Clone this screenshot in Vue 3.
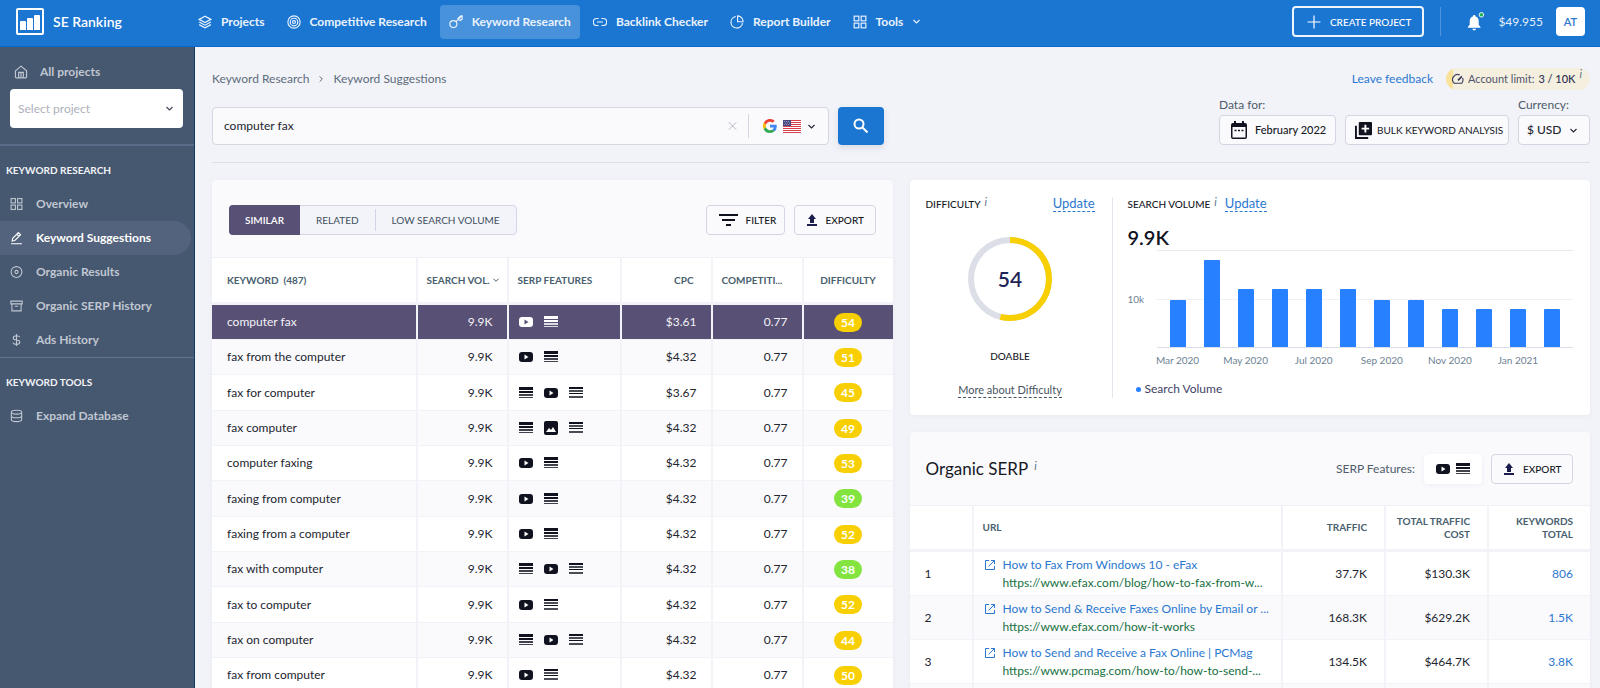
<script setup>
import { ref } from 'vue'

const icons = {
  layers: '<path d="M12 2 2 7.5l10 5.5 10-5.5z"/><path d="m2 12 10 5.500 10-5.500"/><path d="m2 16.500 10 5.500 10-5.500"/>',
  target: '<circle cx="12" cy="12" r="10.500"/><circle cx="12" cy="12" r="6.500"/><circle cx="12" cy="12" r="2.500"/>',
  key: '<circle cx="7.500" cy="15.500" r="6"/><path d="m12 11.500 10-10M16 7.500l3 2L22.500 7V1.500h-2l-5 4z"/>',
  link: '<path d="M9.500 6H6.500a6 6 0 0 0 0 12h3M14.500 6h3a6 6 0 0 1 0 12h-3M7 12h10"/>',
  pie: '<path d="M10 2.500A10 10 0 1 0 21.500 14"/><path d="M13 1.500v10h9.500a10 10 0 0 0-9.500-10z"/>',
  grid: '<rect x="2" y="2" width="8" height="8"/><rect x="14" y="2" width="8" height="8"/><rect x="2" y="14" width="8" height="8"/><rect x="14" y="14" width="8" height="8"/>',
  home: '<path d="M2.500 10 12 2l9.500 8v10.500a1.500 1.500 0 0 1-1.500 1.500H4a1.500 1.500 0 0 1-1.500-1.500z"/><path d="M8 22v-9.500h8V22M12 12.500V22"/>',
  pencil: '<path d="M2 22.500h20M4 17.500l1-5L15.500 2l4 4L9 16.500zM12.500 5l4 4"/>',
  disc: '<circle cx="12" cy="12" r="10"/><circle cx="12" cy="12" r="3"/>',
  archive: '<path d="M1.500 3h21v5h-21zM3.500 8v13h17V8M9 12.500h6"/>',
  dollar: '<path d="M12 1v22M18 6.500C17 4.500 15 4 12 4c-8 0-8 8 0 8s8 8 0 8c-3.500 0-5.500-1-6.500-3"/>',
  database: '<ellipse cx="12" cy="5" rx="9.500" ry="3.500"/><path d="M2.500 5v14c0 4.500 19 4.500 19 0V5M2.500 12c0 4.500 19 4.500 19 0"/>',
  plus: '<path d="M12 1v22M1 12h22"/>',
  chevron: '<path d="m4 8 8 8 8-8"/>',
  right: '<path d="m8 4 8 8-8 8"/>',
  close: '<path d="m2 2 20 20M22 2 2 22"/>',
  external: '<path d="M10 3H3v18h18v-7M14 3h7v7M21 3 9 15"/>'
}

const features = {
  video: '<rect x="1" y="3" width="14" height="10" rx="3" fill="currentColor"/><path class="play" d="m6.500 5.500 4 2.500-4 2.500z"/>',
  lines: '<path fill="currentColor" d="M1 2h14v3H1zM1 6h14v2H1z"/><path fill="currentColor" opacity=".8" d="M1 9h14v2H1zM1 12h14v1H1z"/>',
  list: '<path fill="currentColor" d="M1 2h14v2H1zM1 8h14v1H1z"/><path fill="currentColor" opacity=".75" d="M1 5h14v2H1zM1 11h14v2H1z"/>',
  image: '<rect x="1" y="1" width="14" height="14" rx="2" fill="currentColor"/><path class="play" d="m3 12 3-4 2 2 2-3 3 5z"/>'
}

const nav = [
  { label: 'Projects', icon: 'layers' },
  { label: 'Competitive Research', icon: 'target' },
  { label: 'Keyword Research', icon: 'key', active: true },
  { label: 'Backlink Checker', icon: 'link' },
  { label: 'Report Builder', icon: 'pie' },
  { label: 'Tools', icon: 'grid', menu: true }
]

const researchMenu = [
  { label: 'Overview', icon: 'grid' },
  { label: 'Keyword Suggestions', icon: 'pencil', active: true },
  { label: 'Organic Results', icon: 'disc' },
  { label: 'Organic SERP History', icon: 'archive' },
  { label: 'Ads History', icon: 'dollar' }
]

const query = ref('computer fax')
const tab = ref('SIMILAR')
const tabs = ['SIMILAR', 'RELATED', 'LOW SEARCH VOLUME']

const keywords = [
  { name: 'computer fax', cpc: '$3.61', difficulty: 54, serp: ['video', 'lines'] },
  { name: 'fax from the computer', cpc: '$4.32', difficulty: 51, serp: ['video', 'lines'] },
  { name: 'fax for computer', cpc: '$3.67', difficulty: 45, serp: ['lines', 'video', 'list'] },
  { name: 'fax computer', cpc: '$4.32', difficulty: 49, serp: ['lines', 'image', 'list'] },
  { name: 'computer faxing', cpc: '$4.32', difficulty: 53, serp: ['video', 'lines'] },
  { name: 'faxing from computer', cpc: '$4.32', difficulty: 39, serp: ['video', 'lines'] },
  { name: 'faxing from a computer', cpc: '$4.32', difficulty: 52, serp: ['video', 'lines'] },
  { name: 'fax with computer', cpc: '$4.32', difficulty: 38, serp: ['lines', 'video', 'list'] },
  { name: 'fax to computer', cpc: '$4.32', difficulty: 52, serp: ['video', 'list'] },
  { name: 'fax on computer', cpc: '$4.32', difficulty: 44, serp: ['lines', 'video', 'list'] },
  { name: 'fax from computer', cpc: '$4.32', difficulty: 50, serp: ['video', 'list'] }
]

// bar heights in percent of the plot area
const months = [
  { label: 'Mar 2020', value: 49 },
  { value: 91 },
  { label: 'May 2020', value: 60 },
  { value: 60 },
  { label: 'Jul 2020', value: 60 },
  { value: 60 },
  { label: 'Sep 2020', value: 49 },
  { value: 49 },
  { label: 'Nov 2020', value: 40 },
  { value: 40 },
  { label: 'Jan 2021', value: 40 },
  { value: 40 }
]

const results = [
  { title: 'How to Fax From Windows 10 - eFax', url: 'https://www.efax.com/blog/how-to-fax-from-w...', traffic: '37.7K', cost: '$130.3K', total: '806' },
  { title: 'How to Send & Receive Faxes Online by Email or ...', url: 'https://www.efax.com/how-it-works', traffic: '168.3K', cost: '$629.2K', total: '1.5K' },
  { title: 'How to Send and Receive a Fax Online | PCMag', url: 'https://www.pcmag.com/how-to/how-to-send-...', traffic: '134.5K', cost: '$464.7K', total: '3.8K' },
  { title: '', url: '', traffic: '', cost: '', total: '' }
]
</script>

<template>
  <div class="app">
    <header class="topbar">
      <a href="#" class="brand">
        <svg class="logo" viewBox="0 0 28 27">
          <rect x="1" y="1" width="26" height="25" rx="1" fill="none" stroke="#fff" stroke-width="2" />
          <path fill="#fff" d="M4 14a1 1 0 0 1 1-1h4a1 1 0 0 1 1 1v8H4zM11 11a1 1 0 0 1 1-1h4a1 1 0 0 1 1 1v11h-6zM18 8a1 1 0 0 1 1-1h4a1 1 0 0 1 1 1v14h-6z" />
        </svg>
        SE Ranking
      </a>
      <nav class="nav">
        <a v-for="item in nav" :key="item.label" href="#" class="nav-item" :class="{ active: item.active }">
          <svg class="icon" viewBox="0 0 24 24" v-html="icons[item.icon]"></svg>
          {{ item.label }}
          <svg v-if="item.menu" class="icon chevron" viewBox="0 0 24 24" v-html="icons.chevron"></svg>
        </a>
      </nav>
      <div class="account">
        <button class="create">
          <svg class="icon" viewBox="0 0 24 24" v-html="icons.plus"></svg>
          CREATE PROJECT
        </button>
        <span class="bar"></span>
        <button class="bell" aria-label="Notifications">
          <svg viewBox="0 0 20 22">
            <path fill="#fff" d="M1 16.500 3 14v-4c0-3 1.500-4.500 3.500-5.200a1.500 1.500 0 0 1 3 0C11.500 5.500 13 7 13 10v4l2 2.500v1H1zM6 18.500h4a2 2 0 0 1-4 0z" />
            <circle cx="16" cy="3" r="2.500" fill="#19b34f" stroke="#fff" />
          </svg>
        </button>
        <span class="balance">$49.955</span>
        <button class="avatar">AT</button>
      </div>
    </header>

    <div class="body">
      <aside class="sidebar">
        <div class="project">
          <a href="#" class="all-projects">
            <svg class="icon" viewBox="0 0 24 24" v-html="icons.home"></svg>
            All projects
          </a>
          <div class="select project-select">
            <select aria-label="Select project">
              <option>Select project</option>
            </select>
            <svg class="icon chevron" viewBox="0 0 24 24" v-html="icons.chevron"></svg>
          </div>
        </div>
        <div class="menu">
          <h2>KEYWORD RESEARCH</h2>
          <a v-for="item in researchMenu" :key="item.label" href="#" class="menu-item" :class="{ active: item.active }">
            <svg class="icon" viewBox="0 0 24 24" v-html="icons[item.icon]"></svg>
            {{ item.label }}
          </a>
        </div>
        <div class="menu">
          <h2>KEYWORD TOOLS</h2>
          <a href="#" class="menu-item">
            <svg class="icon" viewBox="0 0 24 24" v-html="icons.database"></svg>
            Expand Database
          </a>
        </div>
      </aside>

      <main class="main">
        <section class="tools">
          <div class="tools-left">
            <div class="crumbs">
              <a href="#">Keyword Research</a>
              <svg class="icon" viewBox="0 0 24 24" v-html="icons.right"></svg>
              <span>Keyword Suggestions</span>
            </div>
            <form class="search" @submit.prevent>
              <div class="search-box">
                <input v-model="query" type="text" aria-label="Keyword" />
                <button type="button" class="clear" aria-label="Clear" @click="query = ''">
                  <svg class="icon" viewBox="0 0 24 24" v-html="icons.close"></svg>
                </button>
                <button type="button" class="engine" aria-label="Search engine">
                  <svg class="google" viewBox="0 0 48 48">
                    <path fill="#ea4335" d="M24 9.500c3.500 0 6.700 1.200 9.200 3.600l6.900-6.900A24 24 0 0 0 2.600 13.200l8 6.200C12.400 13.700 17.700 9.500 24 9.500z" />
                    <path fill="#4285f4" d="M47 24.500c0-1.600-.2-3.100-.4-4.500H24v9h12.900c-.6 3-2.200 5.500-4.700 7.200l7.700 6C44.400 38 47 31.800 47 24.500z" />
                    <path fill="#fbbc05" d="M10.500 28.600a14.500 14.500 0 0 1 0-9.200l-8-6.200a24 24 0 0 0 0 21.600z" />
                    <path fill="#34a853" d="M24 48c6.500 0 11.900-2.100 15.900-5.800l-7.700-6c-2.200 1.500-4.900 2.300-8.200 2.300-6.300 0-11.600-4.200-13.500-9.900l-8 6.200A24 24 0 0 0 24 48z" />
                  </svg>
                  <svg class="flag" viewBox="0 0 18 13">
                    <path fill="#fff" d="M0 0h18v13H0z" />
                    <path fill="#d8414b" d="M0 0h18v1H0zM0 2h18v1H0zM0 4h18v1H0zM0 6h18v1H0zM0 8h18v1H0zM0 10h18v1H0zM0 12h18v1H0z" />
                    <path fill="#4a4a80" d="M0 0h8v6H0z" />
                    <path stroke="#b9b9d6" stroke-dasharray="1 1" stroke-width=".6" d="M1 1.500h6M2 3h6M1 4.500h6" />
                  </svg>
                  <svg class="icon chevron" viewBox="0 0 24 24" v-html="icons.chevron"></svg>
                </button>
              </div>
              <button class="search-btn" aria-label="Search">
                <svg viewBox="0 0 16 16" fill="none" stroke="#fff" stroke-width="2">
                  <circle cx="6" cy="6" r="4.500" />
                  <path d="m9.500 9.500 5 5" />
                </svg>
              </button>
            </form>
          </div>

          <div class="tools-right">
            <div class="top-links">
              <a href="#">Leave feedback</a>
              <div class="limit">
                <svg viewBox="0 0 14 14" fill="none" stroke="#3a3c5c" stroke-width="1.300">
                  <path d="M9 2.400A5.800 5.800 0 0 0 2.700 12h8.600a5.800 5.800 0 0 0 1-6.300" />
                  <path d="m7 8.500 4.500-4.500" stroke-width="2" />
                </svg>
                <span>Account limit:</span><b>3 / 10K</b><i class="info">i</i>
              </div>
            </div>
            <div class="filters">
              <div class="field">
                <label for="period">Data for:</label>
                <button id="period" class="btn period">
                  <svg viewBox="0 0 16 18">
                    <path fill="#10131f" fill-rule="evenodd" d="M2 2h1V0h2v2h6V0h2v2h1a2 2 0 0 1 2 2v12a2 2 0 0 1-2 2H2a2 2 0 0 1-2-2V4a2 2 0 0 1 2-2zm-.5 4v10.500h13V6z" />
                    <path stroke="#10131f" stroke-width="1.500" stroke-dasharray="2 1.500" d="M3.500 9.500h9" />
                  </svg>
                  February 2022
                </button>
              </div>
              <button class="btn bulk">
                <svg viewBox="0 0 18 18">
                  <path fill="none" stroke="#10131f" stroke-width="2" d="M1 4v13h13" />
                  <rect x="4" y="0" width="14" height="14" rx="1" fill="#10131f" />
                  <path stroke="#fff" stroke-width="2" d="M11 3v8M7 7h8" />
                </svg>
                BULK KEYWORD ANALYSIS
              </button>
              <div class="field">
                <label for="currency">Currency:</label>
                <div class="select currency">
                  <select id="currency">
                    <option>$ USD</option>
                  </select>
                  <svg class="icon chevron" viewBox="0 0 24 24" v-html="icons.chevron"></svg>
                </div>
              </div>
            </div>
          </div>
        </section>

        <div class="columns">
          <section class="card">
            <div class="card-head">
              <div class="tabs">
                <button v-for="t in tabs" :key="t" :class="{ active: tab === t }" @click="tab = t">{{ t }}</button>
              </div>
              <div class="actions">
                <button class="btn filter">
                  <svg viewBox="0 0 19 14"><path fill="#10131f" d="M0 1h19v2H0zM3 6h13v2H3zM7 11h5v2H7z" /></svg>
                  FILTER
                </button>
                <button class="btn export">
                  <svg viewBox="0 0 10 12"><path fill="#1c1d4d" d="m5 0 4 5H7v4H3V5H1zM0 10h10v2H0z" /></svg>
                  EXPORT
                </button>
              </div>
            </div>
            <table class="keywords">
              <colgroup>
                <col />
                <col class="w-vol" />
                <col class="w-serp" />
                <col class="w-vol" />
                <col class="w-vol" />
                <col class="w-diff" />
              </colgroup>
              <thead>
                <tr>
                  <th class="first">KEYWORD &nbsp;(487)</th>
                  <th class="sort">SEARCH VOL. <svg class="icon chevron" viewBox="0 0 24 24" v-html="icons.chevron"></svg></th>
                  <th>SERP FEATURES</th>
                  <th class="right cpc">CPC</th>
                  <th>COMPETITI...</th>
                  <th class="center">DIFFICULTY</th>
                </tr>
              </thead>
              <tbody>
                <tr v-for="(row, i) in keywords" :key="row.name" :class="{ selected: i === 0 }">
                  <td class="first">{{ row.name }}</td>
                  <td class="right">9.9K</td>
                  <td>
                    <div class="serp">
                      <svg v-for="(f, n) in row.serp" :key="n" viewBox="0 0 16 16" v-html="features[f]"></svg>
                    </div>
                  </td>
                  <td class="right">{{ row.cpc }}</td>
                  <td class="right">0.77</td>
                  <td class="center"><span class="score" :class="{ easy: row.difficulty < 40 }">{{ row.difficulty }}</span></td>
                </tr>
              </tbody>
            </table>
          </section>

          <div class="right-col">
            <section class="card stats">
              <div class="difficulty">
                <div class="stat-head">
                  <h3>DIFFICULTY <i class="info">i</i></h3>
                  <a href="#" class="dashed">Update</a>
                </div>
                <div class="gauge">
                  <svg viewBox="0 0 84 84" fill="none" stroke-width="6">
                    <circle cx="42" cy="42" r="39" stroke="#dcdee8" />
                    <circle cx="42" cy="42" r="39" stroke="#f8cf00" pathLength="100" stroke-dasharray="54 46" transform="rotate(-90 42 42)" />
                  </svg>
                  <strong>54</strong>
                </div>
                <h3 class="verdict">DOABLE</h3>
                <a href="#" class="dashed more">More about Difficulty</a>
              </div>
              <div class="volume">
                <div class="stat-head start">
                  <h3>SEARCH VOLUME <i class="info">i</i></h3>
                  <a href="#" class="dashed">Update</a>
                </div>
                <div class="total">9.9K</div>
                <div class="chart">
                  <span class="axis">10k</span>
                  <div class="plot">
                    <div v-for="(m, i) in months" :key="i" class="month">
                      <div class="bar-fill" :style="{ height: m.value + '%' }"></div>
                    </div>
                  </div>
                </div>
                <div class="labels">
                  <span v-for="(m, i) in months" :key="i">{{ m.label }}</span>
                </div>
                <div class="legend"><span class="dot"></span>Search Volume</div>
              </div>
            </section>

            <section class="card">
              <div class="card-head serp-head">
                <h2>Organic SERP <i class="info">i</i></h2>
                <div class="actions">
                  <span class="serp-label">SERP Features:</span>
                  <div class="serp-box">
                    <svg viewBox="0 0 16 16" v-html="features.video"></svg>
                    <svg viewBox="0 0 16 16" v-html="features.lines"></svg>
                  </div>
                  <button class="btn export">
                    <svg viewBox="0 0 10 12"><path fill="#1c1d4d" d="m5 0 4 5H7v4H3V5H1zM0 10h10v2H0z" /></svg>
                    EXPORT
                  </button>
                </div>
              </div>
              <table class="results">
                <colgroup>
                  <col class="w-pos" />
                  <col />
                  <col class="w-num" />
                  <col class="w-num" />
                  <col class="w-total" />
                </colgroup>
                <thead>
                  <tr>
                    <th></th>
                    <th>URL</th>
                    <th class="right">TRAFFIC</th>
                    <th class="right">TOTAL TRAFFIC COST</th>
                    <th class="right">KEYWORDS TOTAL</th>
                  </tr>
                </thead>
                <tbody>
                  <tr v-for="(r, i) in results" :key="i">
                    <td class="pos">{{ r.title ? i + 1 : '' }}</td>
                    <td>
                      <div v-if="r.title" class="result">
                        <svg class="icon" viewBox="0 0 24 24" v-html="icons.external"></svg>
                        <div>
                          <a href="#">{{ r.title }}</a>
                          <a href="#" class="url">{{ r.url }}</a>
                        </div>
                      </div>
                    </td>
                    <td class="right">{{ r.traffic }}</td>
                    <td class="right">{{ r.cost }}</td>
                    <td class="right"><a href="#">{{ r.total }}</a></td>
                  </tr>
                </tbody>
              </table>
            </section>
          </div>
        </div>
      </main>
    </div>
  </div>
</template>

<style>
body {
  margin: 0;
  overflow: hidden;
}
.play {
  fill: #fff;
}
.selected .play {
  fill: #585075;
}
</style>

<style scoped>
.app {
  display: flex;
  flex-direction: column;
  height: 100vh;
  overflow: hidden;
  background: #f2f3f8;
  color: #23252f;
  font-family: Lato, 'Open Sans', sans-serif;
  font-size: 12px;
  line-height: 18px;
}
.app * {
  box-sizing: border-box;
}
a {
  color: #2b78d0;
  text-decoration: none;
}
button,
input,
select {
  font: inherit;
  color: inherit;
  margin: 0;
}
button {
  display: flex;
  align-items: center;
  padding: 0;
  border: none;
  background: none;
  white-space: nowrap;
  cursor: pointer;
}
svg {
  display: block;
  flex: none;
}
h2,
h3 {
  margin: 0;
}
.icon {
  width: 14px;
  height: 14px;
  fill: none;
  stroke: currentColor;
  stroke-width: 2;
}
.icon.chevron {
  width: 9px;
  height: 9px;
  stroke-width: 3;
}

/* top bar */
.topbar {
  display: flex;
  align-items: center;
  flex: none;
  height: 47px;
  padding: 0 15px 3px 16px;
  background: #1b76d2;
  border-bottom: 1px solid #0a68cc;
  color: #fff;
}
.brand {
  display: flex;
  align-items: center;
  gap: 9px;
  width: 173px;
  color: #fff;
  font-size: 14px;
  font-weight: 600;
}
.logo {
  width: 28px;
  height: 27px;
}
.nav {
  display: flex;
  gap: 4px;
}
.nav-item {
  display: flex;
  align-items: center;
  gap: 9px;
  height: 34px;
  padding: 0 9px;
  border-radius: 4px;
  color: #eaf3fd;
  font-weight: 700;
}
.nav-item.active {
  background: #4891db;
}
.account {
  display: flex;
  align-items: center;
  margin-left: auto;
}
.create {
  justify-content: space-between;
  width: 132px;
  height: 31px;
  padding: 0 11px 0 13px;
  border: 2px solid #eef5fd;
  border-radius: 4px;
  font-size: 10px;
  font-weight: 500;
}
.bar {
  width: 1px;
  height: 29px;
  margin: 0 26px 0 16px;
  background: #4f95dd;
}
.bell svg {
  width: 18px;
  height: 20px;
}
.balance {
  margin: 0 13px;
  color: #e3effb;
}
.avatar {
  justify-content: center;
  width: 29px;
  height: 29px;
  border-radius: 4px;
  background: #fff;
  color: #2b78d0;
  font-size: 11px;
  font-weight: 600;
}

/* sidebar */
.body {
  display: flex;
  flex: 1;
  min-height: 0;
}
.sidebar {
  flex: none;
  width: 195px;
  background: #465770;
  border-right: 1px solid #133a63;
  font-weight: 700;
}
.project {
  height: 99px;
  padding: 16px 11px 0 10px;
  border-bottom: 2px solid #5b6b87;
}
.all-projects {
  display: flex;
  align-items: center;
  gap: 12px;
  padding-left: 4px;
  color: #c0c7d1;
}
.select {
  display: flex;
  align-items: center;
  position: relative;
}
.select select {
  width: 100%;
  height: 100%;
  border: none;
  background: none;
  appearance: none;
  cursor: pointer;
}
.select .chevron {
  position: absolute;
  right: 9px;
  pointer-events: none;
}
.project-select {
  height: 39px;
  margin-top: 8px;
  border-radius: 4px;
  background: #fff;
  color: #3c4155;
  font-weight: 400;
}
.project-select select {
  padding: 0 8px;
  color: #adb0bb;
}
.menu {
  border-bottom: 1px solid #63728d;
}
.menu:last-child {
  border: none;
}
.menu h2 {
  padding: 15px 6px 8px;
  color: #f2f4f7;
  font-size: 10px;
  font-weight: 700;
}
.menu-item {
  display: flex;
  align-items: center;
  gap: 13px;
  height: 34px;
  margin-right: 3px;
  padding-left: 10px;
  border-radius: 0 17px 17px 0;
  color: #c0c7d1;
}
.menu-item .icon {
  width: 13px;
}
.menu-item.active {
  background: #53637d;
  color: #fff;
}

/* search area */
.main {
  flex: 1;
  min-width: 0;
  padding: 0 10px 0 17px;
}
.tools {
  display: flex;
  justify-content: space-between;
  height: 116px;
  margin-bottom: 17px;
  border-bottom: 1px solid #dcdeea;
}
.tools-left {
  padding-top: 23px;
}
.crumbs {
  display: flex;
  align-items: center;
  gap: 8px;
  color: #5e6c7b;
}
.crumbs a {
  color: inherit;
}
.crumbs .icon {
  width: 8px;
  stroke-width: 3;
}
.search {
  display: flex;
  gap: 9px;
  margin-top: 19px;
}
.search-box {
  display: flex;
  align-items: center;
  width: 617px;
  height: 38px;
  border: 1px solid #d5d6e2;
  border-radius: 4px;
  background: #fafafd;
}
.search-box input {
  flex: 1;
  min-width: 0;
  padding: 0 11px;
  border: none;
  outline: none;
  background: none;
}
.clear {
  padding: 0 11px;
  color: #a2a3b3;
}
.clear .icon {
  width: 9px;
}
.engine {
  gap: 6px;
  height: 24px;
  padding: 0 12px 0 14px;
  border-left: 1px solid #d5d6e2;
}
.google {
  width: 14px;
  height: 14px;
}
.flag {
  width: 18px;
  height: 13px;
}
.search-btn {
  justify-content: center;
  width: 46px;
  height: 38px;
  border-radius: 4px;
  background: #1b76d2;
  box-shadow: 0 3px 6px #d9dbe5;
}
.search-btn svg {
  width: 16px;
  height: 16px;
}
.tools-right {
  display: flex;
  flex-direction: column;
  align-items: flex-end;
  padding-top: 21px;
}
.top-links {
  display: flex;
  align-items: center;
  gap: 13px;
}
.limit {
  display: flex;
  align-items: center;
  gap: 4px;
  height: 22px;
  padding: 0 8px 0 6px;
  border-radius: 11px;
  background: linear-gradient(to right, #fae29a 7px, #f5efe0 7px);
  color: #51556c;
  font-size: 11px;
}
.limit svg {
  width: 12px;
  height: 12px;
}
.limit b {
  color: #2c3050;
  font-weight: 500;
}
.info {
  align-self: flex-start;
  color: #57738a;
  font-size: 11px;
  font-weight: 400;
  line-height: 11px;
}
.filters {
  display: flex;
  align-items: flex-end;
  gap: 9px;
  margin-top: 6px;
}
.field label {
  display: block;
  margin-bottom: 1px;
  color: #4f5c6b;
}
.btn {
  gap: 8px;
  height: 30px;
  border: 1px solid #d3d5e3;
  border-radius: 4px;
  background: #fafafd;
  color: #161824;
  font-size: 10px;
  font-weight: 500;
}
.period {
  width: 117px;
  padding-left: 11px;
  font-size: 11px;
}
.period svg {
  width: 16px;
  height: 18px;
}
.bulk {
  gap: 5px;
  width: 164px;
  padding-left: 9px;
  font-weight: 400;
}
.bulk svg {
  width: 17px;
  height: 17px;
}
.currency {
  width: 72px;
  height: 30px;
  border: 1px solid #d3d5e3;
  border-radius: 4px;
  background: #fafafd;
  font-weight: 500;
}
.currency select {
  padding: 0 8px;
}
.currency .chevron {
  right: 11px;
}

/* cards */
.columns {
  display: grid;
  grid-template-columns: 1fr 1fr;
  align-items: start;
  gap: 17px;
}
.right-col {
  display: flex;
  flex-direction: column;
  gap: 17px;
  min-width: 0;
}
.card {
  min-width: 0;
  border-radius: 4px;
  background: #fafafd;
  box-shadow: 0 1px 4px #e8eaf1;
}
.card-head {
  display: flex;
  align-items: center;
  justify-content: space-between;
  height: 78px;
  padding: 3px 17px 0;
  border-bottom: 1px solid #f0f1f6;
}
.tabs {
  display: flex;
  align-items: center;
  height: 30px;
  border: 1px solid #d3d5e6;
  border-radius: 4px;
  background: #f3f4f9;
}
.tabs button {
  height: 22px;
  padding: 0 16px;
  color: #41505e;
  font-size: 10px;
  font-weight: 400;
}
.tabs button + button + button {
  border-left: 1px solid #d3d5e6;
}
.tabs button.active {
  height: 30px;
  margin: -1px 0 -1px -1px;
  border-radius: 4px 0 0 4px;
  background: #585075;
  color: #fff;
  font-weight: 600;
}
.actions {
  display: flex;
  align-items: center;
  gap: 9px;
}
.filter {
  width: 79px;
  padding-left: 12px;
}
.filter svg {
  width: 19px;
  height: 14px;
}
.export {
  gap: 9px;
  width: 82px;
  padding-left: 12px;
}
.export svg {
  width: 10px;
  height: 12px;
}

/* tables */
table {
  width: 100%;
  border-collapse: separate;
  border-spacing: 0;
  table-layout: fixed;
}
.w-vol {
  width: 91px;
}
.w-serp {
  width: 113px;
}
.w-diff {
  width: 89px;
}
th,
td {
  padding: 0 14px 0 9px;
  border-right: 2px solid #f2f3f8;
  text-align: left;
}
th:last-child,
td:last-child {
  border-right: none;
}
th {
  height: 47px;
  border-bottom: 3px solid #f2f3f8;
  background: #fff;
  color: #48606f;
  font-size: 10px;
  font-weight: 700;
  line-height: 13px;
  white-space: nowrap;
}
td {
  height: 35px;
  border-bottom: 1px solid #f2f3f8;
  background: #fff;
}
.first {
  padding-left: 15px;
}
.right {
  text-align: right;
}
.center {
  padding: 0;
  text-align: center;
}
.cpc {
  padding-right: 17px;
}
.sort .chevron {
  display: inline-block;
  width: 8px;
  height: 8px;
}
.sort {
  padding-right: 0;
}
.keywords tr:nth-child(even) td,
.results tr:nth-child(even) td {
  background: #fafafc;
}
.keywords tbody tr:nth-child(3n) td {
  height: 36px;
}
.keywords .selected td {
  background: #585075;
  color: #f4f3f8;
}
.serp {
  display: flex;
  gap: 9px;
  color: #10131f;
}
.selected .serp {
  color: #fff;
}
.serp svg,
.serp-box svg {
  width: 16px;
  height: 16px;
}
.score {
  display: inline-block;
  width: 28px;
  height: 19px;
  border-radius: 10px;
  background: #f8cf00;
  color: #fff;
  font-weight: 700;
  line-height: 19px;
}
.score.easy {
  background: #83e440;
}

/* stats card */
.stats {
  display: flex;
  height: 235px;
  padding: 17px 17px 17px 16px;
  background: #fff;
}
.difficulty {
  display: flex;
  flex-direction: column;
  align-items: center;
  flex: none;
  width: 187px;
  padding-right: 17px;
  border-right: 1px solid #e6e7ee;
}
.stat-head {
  display: flex;
  align-items: center;
  justify-content: space-between;
  width: 100%;
  height: 14px;
}
.stat-head.start {
  justify-content: flex-start;
  gap: 8px;
}
h3 {
  color: #161824;
  font-size: 10px;
  font-weight: 500;
  line-height: 12px;
}
.stat-head h3 {
  display: flex;
  gap: 4px;
}
.stat-head h3 .info {
  margin-top: -2px;
}
.dashed {
  border-bottom: 1px dashed currentColor;
  font-size: 13px;
  line-height: 15px;
}
.gauge {
  display: grid;
  place-items: center;
  margin-top: 26px;
}
.gauge svg,
.gauge strong {
  grid-area: 1 / 1;
}
.gauge svg {
  width: 84px;
  height: 84px;
}
.gauge strong {
  color: #1f2558;
  font-size: 21px;
  font-weight: 600;
}
.verdict {
  margin: 29px 0 20px;
}
.dashed.more {
  color: #48545f;
  font-size: 11px;
}
.volume {
  flex: 1;
  min-width: 0;
  padding-left: 15px;
}
.total {
  height: 39px;
  padding-top: 17px;
  color: #10131f;
  font-size: 20px;
  font-weight: 600;
}
.chart {
  display: flex;
  align-items: center;
}
.axis {
  width: 29px;
  color: #6c8192;
  font-size: 10px;
}
.plot {
  display: flex;
  flex: 1;
  align-items: flex-end;
  height: 98px;
  padding: 0 4px;
  border-top: 1px solid #e8e9ec;
  border-bottom: 1px solid #d9deeb;
  background: linear-gradient(#f0f1f3, #f0f1f3) 0 48px / 100% 1px no-repeat;
}
.month {
  display: flex;
  flex: 1;
  align-items: flex-end;
  justify-content: center;
  height: 100%;
}
.bar-fill {
  width: 16px;
  border-radius: 1px 1px 0 0;
  background: #2680ff;
}
.labels {
  display: flex;
  margin: 3px 0 0 29px;
  padding: 0 4px;
  color: #6c8192;
  font-size: 10px;
}
.labels span {
  display: flex;
  flex: 1;
  justify-content: center;
  width: 0;
  white-space: nowrap;
}
.legend {
  display: flex;
  align-items: center;
  gap: 4px;
  margin-top: 11px;
  padding-left: 8px;
  color: #3f4266;
}
.dot {
  width: 5px;
  height: 5px;
  border-radius: 50%;
  background: #2680ff;
}

/* organic serp */
.serp-head {
  height: 74px;
  padding: 0 17px 0 16px;
}
.serp-head h2 {
  display: flex;
  gap: 6px;
  color: #161824;
  font-size: 17px;
  font-weight: 400;
}
.serp-label {
  color: #4f5c6b;
}
.serp-box {
  display: flex;
  gap: 4px;
  padding: 7px 11px;
  border-radius: 4px;
  background: #fff;
  color: #10131f;
  box-shadow: 0 1px 4px #eceef4;
}
.w-pos {
  width: 64px;
}
.w-num {
  width: 103px;
}
.w-total {
  width: 101px;
}
.results th,
.results td {
  padding-right: 17px;
}
.results th {
  height: 46px;
  white-space: normal;
}
.results td {
  height: 44px;
}
.results .pos {
  padding-left: 15px;
}
.result {
  display: flex;
  gap: 7px;
}
.result .icon {
  width: 12px;
  margin-top: 2px;
  margin-left: 1px;
  color: #2b78d0;
}
.result > div {
  flex: 1;
  min-width: 0;
  margin-right: -12px;
}
.result a {
  display: block;
  overflow: hidden;
  white-space: nowrap;
  text-overflow: ellipsis;
}
.result a.url {
  color: #17703f;
}
</style>
